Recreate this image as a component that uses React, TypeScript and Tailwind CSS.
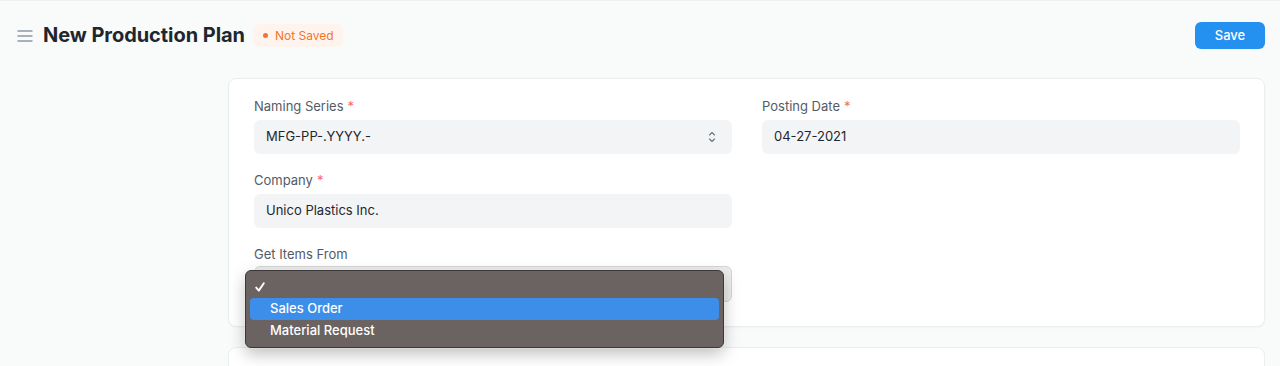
import React from "react";

function Field({ label, required, children }: { label: string; required?: boolean; children: React.ReactNode }) {
  return (
    <div className="flex flex-col">
      <div className="h-4 mb-[6px] text-[13px] leading-4 text-[#525c66]">
        {label}
        {required && <span className="text-[#f56b6b] ml-1">*</span>}
      </div>
      {children}
    </div>
  );
}

export default function App() {
  return (
    <div
      className="h-[366px] bg-[#f9fafa] border-t border-[#eef0f0] overflow-hidden"
      style={{ fontFamily: "Inter, 'Noto Sans', sans-serif" }}
    >
      <div className="h-[69px] flex items-center pl-[17px] pr-[15px]">
        <svg width="16" height="12" viewBox="0 0 16 12" className="mr-[10px] mt-[1px]">
          <path d="M0.5 1h15M0.5 6h15M0.5 11h15" stroke="#8d99a6" strokeWidth="1.5" />
        </svg>
        <h1 className="text-[20px] font-bold text-[#1f272e] tracking-[-0.05px] leading-7 -mt-[1px]">New Production Plan</h1>
        <div className="ml-[8px] h-[23px] pl-[10px] pr-[9px] rounded-md bg-[#fff4ed] flex items-center gap-[7px] text-[12px] text-[#f3742e]">
          <span className="w-[5px] h-[5px] rounded-full bg-[#f3742e]" />
          Not Saved
        </div>
        <div className="flex-1" />
        <button className="w-[70px] h-[27px] rounded-md bg-[#2490ef] text-white text-[13px] font-medium">Save</button>
      </div>

      <div className="ml-[228px] mr-[15px] mt-[8px]">
        <div className="bg-white rounded-lg border border-[#ebeef0] shadow-[0_1px_2px_rgba(0,0,0,0.03)] pt-[19px] pl-[25px] pr-[24px] pb-[24px]">
          <div className="grid grid-cols-2 gap-x-[30px]">
            <div className="flex flex-col gap-[18px]">
              <Field label="Naming Series" required>
                <div className="h-[34px] rounded-md bg-[#f3f4f5] flex items-center px-3 text-[13px] text-[#1f272e]">
                  <span className="flex-1">MFG-PP-.YYYY.-</span>
                  <svg width="8" height="14" viewBox="0 0 8 14" className="mr-[4px]">
                    <path d="M1.5 5L4 2.5L6.5 5M1.5 9L4 11.5L6.5 9" stroke="#6b7680" strokeWidth="1.1" fill="none" strokeLinecap="round" strokeLinejoin="round" />
                  </svg>
                </div>
              </Field>
              <Field label="Company" required>
                <div className="h-[34px] rounded-md bg-[#f3f4f5] flex items-center px-3 text-[13px] text-[#1f272e]">
                  Unico Plastics Inc.
                </div>
              </Field>
              <Field label="Get Items From">
                <div className="relative">
                  <div className="h-[36px] -mt-[2px] rounded-md bg-[#ececec] border border-[#d6d6d6]" />
                  <div className="absolute left-[-9px] top-[2px] w-[479px] h-[78px] rounded-[6px] bg-[#6b6362] border border-[#3d3837] shadow-[0_0_0_1px_rgba(255,255,255,0.15),0_6px_16px_rgba(0,0,0,0.25)] py-[5px] px-[4px] text-[13px] font-medium text-white">
                    <div className="h-[22px] flex items-center pl-[5px]">
                      <svg width="10" height="10" viewBox="0 0 10 10">
                        <path d="M1.2 5.6L3.8 8.6L8.8 1.2" stroke="#ffffff" strokeWidth="1.9" fill="none" strokeLinecap="round" strokeLinejoin="round" />
                      </svg>
                    </div>
                    <div className="h-[22px] flex items-center pl-[20px] rounded-[4px] bg-[#3d8ee9]">Sales Order</div>
                    <div className="h-[22px] flex items-center pl-[20px]">Material Request</div>
                  </div>
                </div>
              </Field>
            </div>
            <div className="flex flex-col">
              <Field label="Posting Date" required>
                <div className="h-[34px] rounded-md bg-[#f3f4f5] flex items-center px-3 text-[13px] text-[#1f272e]">
                  04-27-2021
                </div>
              </Field>
            </div>
          </div>
        </div>
        <div className="mt-[20px] h-[40px] bg-white rounded-lg border border-[#ebeef0]" />
      </div>
    </div>
  );
}
